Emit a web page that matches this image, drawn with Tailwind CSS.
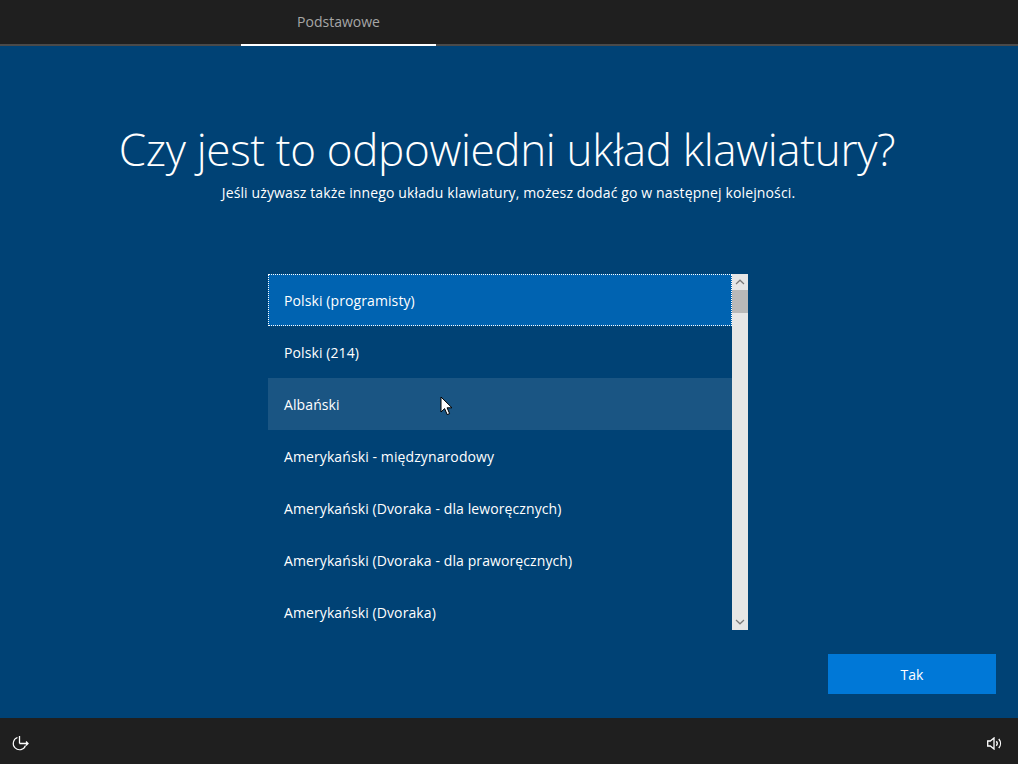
<!DOCTYPE html>
<html lang="pl">
<head>
<meta charset="utf-8">
<script src="https://cdn.jsdelivr.net/npm/@tailwindcss/browser@4"></script>
</head>
<body class="m-0 overflow-hidden">
<div class="relative flex h-[764px] w-[1018px] flex-col bg-[#004275] font-['Open_Sans','Noto_Sans',sans-serif] text-white">
  <header class="flex h-[46px] shrink-0 border-b-2 border-[#4a4a4a] bg-[#1f1f1f] pl-[241px]">
    <div class="-mb-[2px] flex h-[46px] w-[195px] items-center justify-center border-b-2 border-white pb-[1px] text-[14px] text-[#a6a6a6]">Podstawowe</div>
  </header>
  <main class="flex min-h-0 flex-1 flex-col">
    <h1 class="mt-[73px] pr-[4px] text-center text-[44px] leading-[60px] font-light tracking-[-0.33px] text-white">Czy jest to odpowiedni układ klawiatury?</h1>
    <p class="mt-[4px] pr-[1px] text-center text-[14px] leading-[20px] tracking-[0.13px] text-white">Jeśli używasz także innego układu klawiatury, możesz dodać go w następnej kolejności.</p>
    <div class="mt-[71px] ml-[268px] flex h-[356px] w-[480px]">
      <ul class="h-[356px] w-[464px] overflow-hidden text-[14px] tracking-[0.1px]">
        <li class="flex h-[52px] items-center bg-[#0063b1] pl-[16px] outline-1 -outline-offset-1 outline-dotted outline-white">Polski (programisty)</li>
        <li class="flex h-[52px] items-center pl-[16px]">Polski (214)</li>
        <li class="flex h-[52px] items-center bg-[#1a5583] pl-[16px]">Albański</li>
        <li class="flex h-[52px] items-center pl-[16px]">Amerykański - międzynarodowy</li>
        <li class="flex h-[52px] items-center pl-[16px]">Amerykański (Dvoraka - dla leworęcznych)</li>
        <li class="flex h-[52px] items-center pl-[16px]">Amerykański (Dvoraka - dla praworęcznych)</li>
        <li class="flex h-[52px] items-center pl-[16px]">Amerykański (Dvoraka)</li>
      </ul>
      <div class="flex h-[356px] w-[16px] flex-col bg-[#e6e6e6]">
        <div class="flex h-[16px] items-center justify-center">
          <svg width="10" height="6" viewBox="0 0 10 6" fill="none"><path d="M1 5 5 1.2 9 5" stroke="#7a7a7a" stroke-width="1.2"/></svg>
        </div>
        <div class="h-[23px] bg-[#b9b9b9]"></div>
        <div class="flex-1"></div>
        <div class="flex h-[16px] items-center justify-center">
          <svg width="10" height="6" viewBox="0 0 10 6" fill="none"><path d="M1 1 5 4.8 9 1" stroke="#7a7a7a" stroke-width="1.2"/></svg>
        </div>
      </div>
    </div>
    <div class="mt-[24px] flex justify-end pr-[22px]">
      <button class="h-[40px] w-[168px] bg-[#0078d7] text-[14px] text-white">Tak</button>
    </div>
  </main>
  <footer class="flex h-[46px] shrink-0 items-center justify-between bg-[#1f1f1f] pt-[4px] pr-[16px] pl-[12px]">
    <svg width="17" height="15" viewBox="0 0 17 15" fill="none" stroke="#ffffff"><path d="M5.500 1.500A6.300 6.300 0 1 0 13.500 9.500" stroke-width="1.100"/><path d="M7.500 0v7.500M7.500 7.500H16M14 5.500l2 2-2 2" stroke-width="1.300"/></svg>
    <svg width="15" height="13" viewBox="0 0 15 13" fill="none" stroke="#ffffff" stroke-width="1.300"><path d="M.7 4h2.600L7 1v11L3.300 9H.7z"/><path d="M9.300 4.200a3.500 3.500 0 0 1 0 4.600M11.800 2a7 7 0 0 1 0 9"/></svg>
  </footer>
  <svg class="absolute top-[396px] left-[440px]" width="14" height="20" viewBox="0 0 14 20"><path d="M1 1v15l3.600-3.400 2.600 6 2.400-1-2.500-5.800H12z" fill="#fff" stroke="#000" stroke-width="1"/></svg>
</div>
</body>
</html>
